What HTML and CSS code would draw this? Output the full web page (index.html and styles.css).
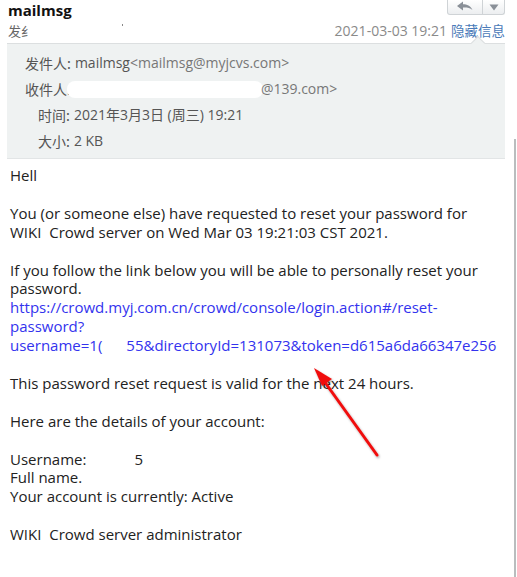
FILE: index.html
```html
<!DOCTYPE html>
<html lang="zh">
<head>
<meta charset="utf-8">
<title>mailmsg</title>
<link rel="stylesheet" href="styles.css">
</head>
<body>
<div class="page">
  <div class="toprow">
    <div class="title">mailmsg</div>
    <div class="toolbar">
      <span class="tbtn tbtn-reply">
        <svg width="18" height="12" viewBox="0 0 18 12"><path d="M1 5 L7 0.5 L7 3.2 C11 3.2 14.5 4.5 16.5 9 C14 6.8 11 6.5 7 6.6 L7 9.5 Z" fill="#8a9098"/></svg>
      </span>
      <span class="tbtn tbtn-more">
        <svg width="10" height="7" viewBox="0 0 10 7"><path d="M0.5 0.5 L9.5 0.5 L5 6.5 Z" fill="#8a9098"/></svg>
      </span>
    </div>
  </div>
  <div class="subrow">
    <div class="to-short">发纟<span class="dot"></span></div>
    <div class="meta"><span class="date">2021-03-03 19:21</span><a class="hide-link">隐藏信息</a></div>
  </div>
  <div class="infobox">
    <div class="irow"><span class="lbl">发件人:</span> <span class="sender">mailmsg</span><span class="addr">&lt;mailmsg@myjcvs.com&gt;</span></div>
    <div class="irow"><span class="lbl">收件人.</span><span class="redact-pill"></span><span class="addr">@139.com&gt;</span></div>
    <div class="irow indent"><span class="lbl">时间:</span> 2021年3月3日 (周三) 19:21</div>
    <div class="irow indent"><span class="lbl">大小:</span> 2 KB</div>
  </div>
  <div class="content">
    <p>Hell</p>
    <p>You (or someone else) have requested to reset your password for<br>WIKI&nbsp; Crowd server on Wed Mar 03 19:21:03 CST 2021.</p>
    <p>If you follow the link below you will be able to personally reset your<br>password.<br><a class="link">https://crowd.myj.com.cn/crowd/console/login.action#/reset-<br>password?<br>username=1(<span class="gap"></span>55&amp;directoryId=131073&amp;token=d615a6da66347e256</a></p>
    <p>This password reset request is valid for the next 24 hours.</p>
    <p>Here are the details of your account:</p>
    <p>Username:<span class="gap2"></span>5<br>Full name.<br>Your account is currently: Active</p>
    <p>WIKI&nbsp; Crowd server administrator</p>
    <svg class="arrow" width="90" height="110" viewBox="0 0 90 110">
      <defs>
        <filter id="sh" x="-30%" y="-30%" width="160%" height="160%">
          <feDropShadow dx="1" dy="1.5" stdDeviation="1.2" flood-color="#000" flood-opacity="0.35"/>
        </filter>
      </defs>
      <g filter="url(#sh)">
        <line x1="77" y1="100" x2="24" y2="26" stroke="#f01010" stroke-width="3" stroke-linecap="round"/>
        <path d="M14 13 L32 24 L22 31 Z" fill="#f01010"/>
      </g>
    </svg>
  </div>
</div>
</body>
</html>
```
FILE: styles.css
```css
html, body {
  margin: 0;
  padding: 0;
  background: #fff;
}
body {
  font-family: "Open Sans", "Noto Sans CJK SC", sans-serif;
  color: #222;
}
.page {
  width: 517px;
  height: 577px;
  overflow: hidden;
  position: relative;
}
.toprow {
  display: flex;
  justify-content: space-between;
  align-items: flex-start;
  padding: 0 12px 0 8px;
  height: 19px;
}
.title {
  font-size: 15px;
  font-weight: 700;
  color: #111;
  line-height: 19px;
  padding-top: 1px;
}
.toolbar {
  display: flex;
  height: 15px;
  border: 1px solid #cfd3d6;
  border-top: none;
  border-radius: 0 0 3px 3px;
  background: linear-gradient(#ffffff, #eceef0);
  box-sizing: border-box;
}
.tbtn {
  display: flex;
  align-items: center;
  justify-content: center;
  height: 14px;
}
.tbtn-reply {
  width: 34px;
  border-right: 1px solid #cfd3d6;
}
.tbtn-more {
  width: 21px;
}
.subrow {
  display: flex;
  justify-content: space-between;
  align-items: center;
  padding: 0 12px 0 8px;
  height: 22px;
}
.to-short {
  font-size: 13px;
  color: #666;
  position: relative;
  width: 130px;
}
.dot {
  position: absolute;
  left: 114px;
  top: 3px;
  width: 1px;
  height: 2px;
  background: #888;
}
.meta {
  font-size: 14px;
  display: flex;
  gap: 4px;
  align-items: center;
}
.date {
  color: #8a8a8a;
}
.hide-link {
  color: #4a7ab8;
  font-family: "Noto Sans CJK SC", sans-serif;
  font-size: 13.5px;
}
.infobox {
  position: relative;
  margin: 2px 12px 0 7px;
  background: #eff2f2;
  border-top: 1px solid #dcdfe0;
  border-bottom: 1px solid #e2e5e6;
  height: 116px;
  padding: 6px 0 0 18px;
  box-sizing: border-box;
  font-size: 14px;
  color: #555;
}
.infobox::before {
  content: "";
  position: absolute;
  top: -6px;
  left: 466px;
  width: 9px;
  height: 9px;
  background: #eff2f2;
  border-top: 1px solid #dcdfe0;
  border-left: 1px solid #dcdfe0;
  transform: rotate(45deg);
}
.irow {
  height: 26px;
  line-height: 26px;
  white-space: nowrap;
  display: flex;
  align-items: center;
}
.irow .lbl {
  font-family: "Noto Sans CJK SC", sans-serif;
  margin-right: 4px;
}
.indent {
  padding-left: 13px;
}
.sender {
  color: #555;
}
.addr {
  color: #777;
}
.redact-pill {
  display: inline-block;
  width: 196px;
  height: 17px;
  background: #fff;
  border-radius: 8px;
  margin: 0 -2px 0 -8px;
}
.content {
  position: relative;
  padding: 7px 0 0 10px;
  font-size: 15px;
  line-height: 18.9px;
  color: #222;
  white-space: nowrap;
}
.content::after {
  content: "";
  position: absolute;
  right: 1px;
  top: -20px;
  height: 600px;
  width: 2px;
  background: #b9bdbe;
}
.content p {
  margin: 0 0 18.9px 0;
}
.link {
  color: #3333ee;
}
.gap {
  display: inline-block;
  width: 24px;
}
.gap2 {
  display: inline-block;
  width: 48px;
}
.arrow {
  position: absolute;
  left: 300px;
  top: 196px;
}
```
